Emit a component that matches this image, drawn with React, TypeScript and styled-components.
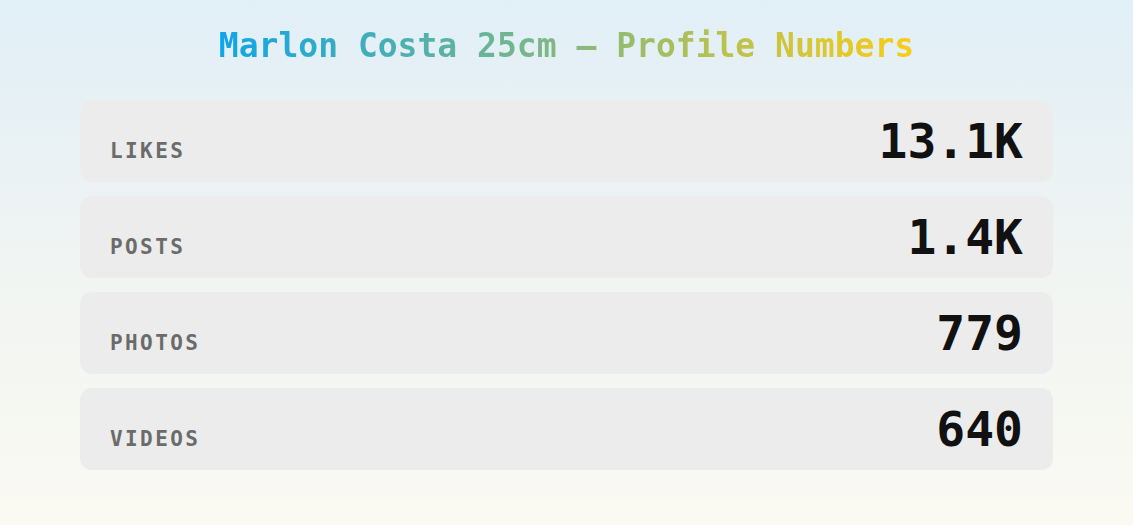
import React from "react";
import styled, { createGlobalStyle } from "styled-components";

const stats = [
  { label: "Likes", value: "13.1K" },
  { label: "Posts", value: "1.4K" },
  { label: "Photos", value: "779" },
  { label: "Videos", value: "640" },
];

const App = (): JSX.Element => {
  return (
    <>
      <GlobalStyle />
      <Page>
        <Title>Marlon Costa 25cm — Profile Numbers</Title>
        <List>
          {stats.map((s) => (
            <Card key={s.label}>
              <Label>{s.label}</Label>
              <Value>{s.value}</Value>
            </Card>
          ))}
        </List>
      </Page>
    </>
  );
};

export default App;

const GlobalStyle = createGlobalStyle`
  html, body {
    margin: 0;
    padding: 0;
  }
  body {
    font-family: "DejaVu Sans Mono", "Liberation Mono", monospace;
  }
`;

const Page = styled.div`
  min-height: 525px;
  box-sizing: border-box;
  padding: 26px 80px 0;
  background: linear-gradient(180deg, #e1eff7 0%, #f0f4f2 50%, #fafaf2 100%);
`;

const Title = styled.h1`
  margin: 0 auto 34px;
  width: fit-content;
  font-size: 33px;
  line-height: 40px;
  font-weight: bold;
  text-align: center;
  background: linear-gradient(90deg, #0ea5e9 0%, #facc15 100%);
  background-clip: text;
  -webkit-background-clip: text;
  color: transparent;
`;

const List = styled.div`
  display: flex;
  flex-direction: column;
  gap: 14px;
`;

const Card = styled.div`
  display: flex;
  justify-content: space-between;
  align-items: baseline;
  padding: 17px 30px;
  background: #ececec;
  border-radius: 12px;
`;

const Label = styled.span`
  font-size: 21px;
  font-weight: bold;
  letter-spacing: 2.4px;
  text-transform: uppercase;
  color: #6b6b6b;
`;

const Value = styled.span`
  font-size: 48px;
  line-height: 1;
  font-weight: bold;
  color: #111111;
`;
